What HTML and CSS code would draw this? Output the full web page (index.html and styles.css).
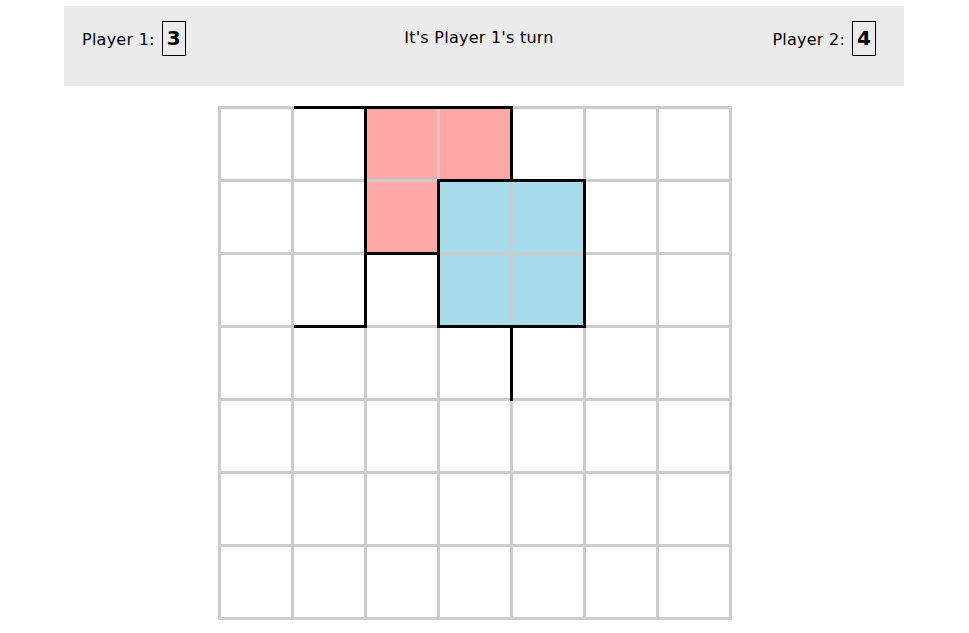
FILE: index.html
```html
<!DOCTYPE html>
<html lang="en">
<head>
<meta charset="utf-8">
<title>Dots and Boxes</title>
<link rel="stylesheet" href="styles.css">
</head>
<body>
<div class="app">
  <header class="scorebar">
    <div class="player"><span class="label">Player 1:</span><span class="score">3</span></div>
    <div class="turn">It's Player 1's turn</div>
    <div class="player p2"><span class="label">Player 2:</span><span class="score">4</span></div>
  </header>
  <div class="board">
    <div class="box pink r0 c2"></div>
    <div class="box pink r0 c3"></div>
    <div class="box pink r1 c2"></div>
    <div class="box blue r1 c3"></div>
    <div class="box blue r1 c4"></div>
    <div class="box blue r2 c3"></div>
    <div class="box blue r2 c4"></div>

    <div class="edge h y0 c1"></div>
    <div class="edge h y0 c2"></div>
    <div class="edge h y0 c3"></div>
    <div class="edge h y1 c3"></div>
    <div class="edge h y1 c4"></div>
    <div class="edge h y2 c2"></div>
    <div class="edge h y3 c1"></div>
    <div class="edge h y3 c3"></div>
    <div class="edge h y3 c4"></div>

    <div class="edge v x2 r0"></div>
    <div class="edge v x2 r1"></div>
    <div class="edge v x2 r2"></div>
    <div class="edge v x3 r1"></div>
    <div class="edge v x3 r2"></div>
    <div class="edge x3 y1"></div>
    <div class="edge v x4 r0"></div>
    <div class="edge v x4 r3"></div>
    <div class="edge v x5 r1"></div>
    <div class="edge v x5 r2"></div>
  </div>
</div>
</body>
</html>
```
FILE: styles.css
```css
html, body {
  margin: 0;
  background: #fff;
}

body {
  font-family: "DejaVu Sans", Verdana, sans-serif;
  color: #000;
}

.app {
  width: 840px;
  margin: 6px 0 0 64px;
}

.scorebar {
  box-sizing: border-box;
  height: 80px;
  padding: 15px 28px 0 18px;
  background: #ebebeb;
  display: grid;
  grid-template-columns: 1fr auto 1fr;
  align-items: start;
  font-size: 16px;
  letter-spacing: 0.25px;
}

.player {
  display: flex;
  align-items: center;
  gap: 7px;
}

.label {
  padding-top: 2px;
}

.p2 {
  justify-self: end;
}

.score {
  border: 1px solid #000;
  padding: 5px 4px;
  font-size: 20px;
  line-height: 23px;
  font-weight: bold;
  letter-spacing: 0;
}

.turn {
  margin-top: 7px;
}

.board {
  display: grid;
  grid-template-columns: repeat(7, 3px 70px) 3px;
  grid-template-rows: repeat(7, 3px 70px) 3px;
  width: 514px;
  height: 514px;
  margin: 20px 0 0 154px;
  background-color: #fff;
  background-image:
    repeating-linear-gradient(90deg, #ccc 0 3px, transparent 3px 73px),
    repeating-linear-gradient(180deg, #ccc 0 3px, transparent 3px 73px);
}

.pink { background: #ffa8a8; }
.blue { background: #a8dbea; }
.edge { background: #000; }

.h { grid-column-end: span 2; }
.v { grid-row-end: span 2; }

/* box rows / columns */
.r0 { grid-row-start: 2; }
.r1 { grid-row-start: 4; }
.r2 { grid-row-start: 6; }
.r3 { grid-row-start: 8; }
.c1 { grid-column-start: 4; }
.c2 { grid-column-start: 6; }
.c3 { grid-column-start: 8; }
.c4 { grid-column-start: 10; }

/* grid lines */
.y0 { grid-row-start: 1; }
.y1 { grid-row-start: 3; }
.y2 { grid-row-start: 5; }
.y3 { grid-row-start: 7; }
.x2 { grid-column-start: 5; }
.x3 { grid-column-start: 7; }
.x4 { grid-column-start: 9; }
.x5 { grid-column-start: 11; }
```
